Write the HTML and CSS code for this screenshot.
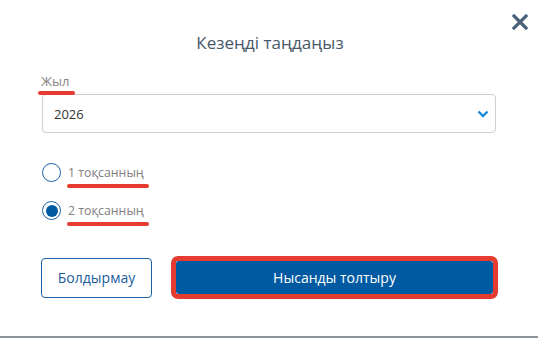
FILE: index.html
```html
<!DOCTYPE html>
<html lang="kk">
<head>
<meta charset="utf-8">
<title>Кезеңді таңдаңыз</title>
<link rel="stylesheet" href="styles.css">
</head>
<body>
<div class="modal">
  <button class="close" aria-label="close">
    <svg width="16" height="16" viewBox="0 0 16 16"><path d="M2 2 L14 14 M14 2 L2 14" stroke="#4b6279" stroke-width="3.2" stroke-linecap="square" fill="none"/></svg>
  </button>
  <h1 class="title">Кезеңді таңдаңыз</h1>
  <div class="form">
    <label class="label marked">Жыл</label>
    <div class="select">
      <span class="select-value">2026</span>
      <svg class="chev" width="12" height="8" viewBox="0 0 12 8"><path d="M1.5 1.5 L6 6 L10.5 1.5" stroke="#1a8ad8" stroke-width="2.4" fill="none"/></svg>
    </div>
    <div class="radios">
      <div class="radio-row">
        <span class="radio"></span>
        <span class="radio-text marked">1 тоқсанның</span>
      </div>
      <div class="radio-row">
        <span class="radio checked"></span>
        <span class="radio-text marked">2 тоқсанның</span>
      </div>
    </div>
    <div class="actions">
      <button class="btn btn-outline">Болдырмау</button>
      <div class="highlight">
        <button class="btn btn-primary">Нысанды толтыру</button>
      </div>
    </div>
  </div>
  <div class="footer-line"></div>
</div>
</body>
</html>
```
FILE: styles.css
```css
* { box-sizing: border-box; }
html, body { margin: 0; padding: 0; background: #fff; }
body {
  font-family: "Open Sans", "Noto Sans", sans-serif;
  width: 538px;
  height: 339px;
  overflow: hidden;
}
.modal {
  position: relative;
  width: 538px;
  height: 339px;
  display: flex;
  flex-direction: column;
}
.close {
  position: absolute;
  top: 14px;
  left: 512px;
  width: 16px;
  height: 16px;
  padding: 0;
  border: 0;
  background: none;
  display: block;
}
.close svg { display: block; }
.title {
  margin: 31px 0 0 0;
  padding-left: 2px;
  font-size: 17px;
  line-height: 24px;
  font-weight: 500;
  color: #475869;
  text-align: center;
}
.form {
  padding: 0 39px 0 42px;
  display: flex;
  flex-direction: column;
  flex: 1;
}
.label {
  margin-top: 17px;
  font-size: 13px;
  line-height: 18px;
  color: #8a8580;
  align-self: flex-start;
  margin-left: -1px;
}
.marked { position: relative; }
.marked::after {
  content: "";
  position: absolute;
  left: -3px;
  right: -6px;
  bottom: -5px;
  height: 4px;
  border-radius: 2px;
  background: #e53b30;
}
.select {
  margin-top: 4px;
  height: 39px;
  width: 454px;
  border: 1px solid #cfcfcf;
  border-radius: 4px;
  display: flex;
  align-items: center;
  justify-content: space-between;
  padding: 0 6px 0 11px;
}
.select-value {
  font-size: 13px;
  color: #333;
}
.chev { display: block; margin-top: 1px; }
.radios {
  margin-top: 30px;
  display: flex;
  flex-direction: column;
  gap: 19px;
}
.radio-row {
  display: flex;
  align-items: center;
  height: 19px;
  gap: 7px;
}
.radio {
  width: 19px;
  height: 19px;
  border: 1.6px solid #1c62a6;
  border-radius: 50%;
  background: #fff;
  flex: none;
  display: flex;
  align-items: center;
  justify-content: center;
}
.radio.checked::before {
  content: "";
  width: 12px;
  height: 12px;
  border-radius: 50%;
  background: #005aa2;
}
.radio-text {
  font-size: 12.3px;
  line-height: 18px;
  color: #808080;
  margin-top: 1px;
}
.radio-text.marked::after { left: -1px; right: -5px; bottom: -6px; }
.actions {
  margin-top: 36px;
  display: flex;
  align-items: center;
  gap: 19px;
}
.btn {
  font-family: "Open Sans", "Noto Sans", sans-serif;
  font-size: 14px;
  border-radius: 4px;
  cursor: pointer;
}
.btn-outline {
  width: 111px;
  height: 40px;
  margin-left: -1px;
  border: 1px solid #1c62a6;
  background: #fff;
  color: #1c5d9c;
}
.highlight {
  width: 327px;
  height: 43px;
  border: 5px solid #e53b30;
  border-radius: 7px;
  display: flex;
}
.btn-primary {
  flex: 1;
  border: 0;
  border-radius: 3px;
  background: #005aa2;
  color: #fff;
  padding: 0;
}
.footer-line {
  height: 2px;
  background: #8e949c;
  margin-bottom: 1px;
}
```
